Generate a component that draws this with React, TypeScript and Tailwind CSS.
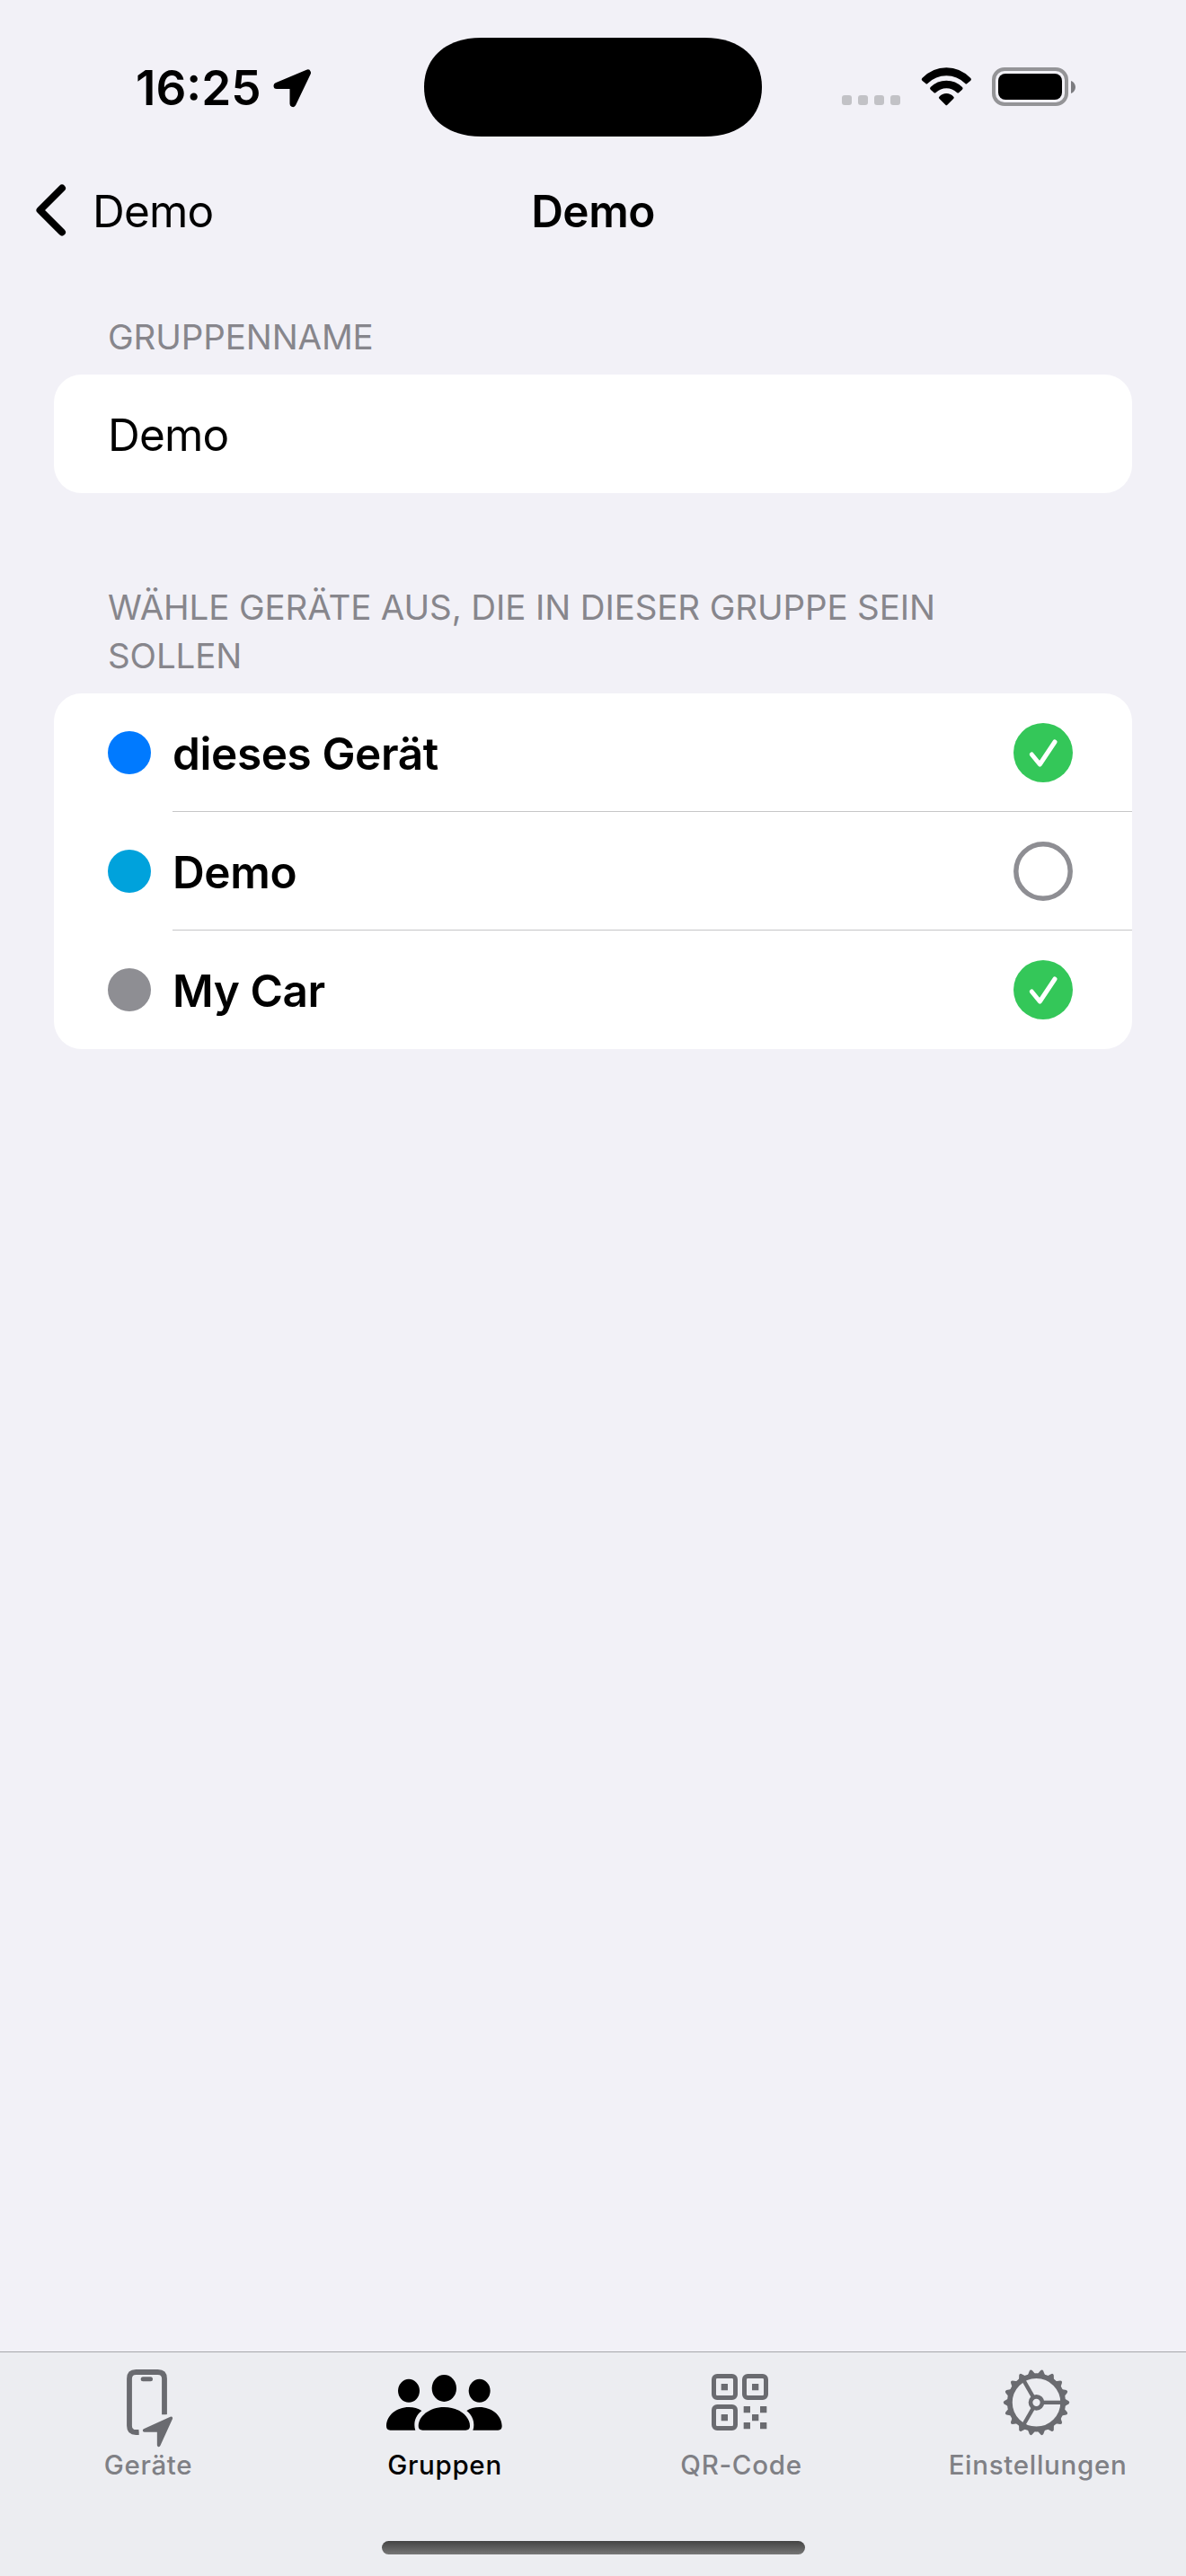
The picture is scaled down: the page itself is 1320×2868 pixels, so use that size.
import type { ReactNode } from "react";

type Device = { name: string; dot: string; selected: boolean };

const devices: Device[] = [
  { name: "dieses Gerät", dot: "bg-[#007aff]", selected: true },
  { name: "Demo", dot: "bg-[#00a2dc]", selected: false },
  { name: "My Car", dot: "bg-[#8e8e93]", selected: true },
];

function StatusBar() {
  return (
    <div className="flex h-[168px] justify-between">
      <div className="flex w-[472px] pl-[151px]">
        <span className="mt-[62px] h-[72px] w-[153px] whitespace-nowrap text-[53px] leading-[72px] font-semibold">
          16:25
        </span>
        <svg className="mt-[77px] h-[43px] w-[43px]" viewBox="0 0 43 43">
          <path d="M4 18.5 38.5 4 22 38.5V18.5Z" fill="#000" stroke="#000" strokeWidth="7" strokeLinejoin="round" />
        </svg>
      </div>
      <svg className="mt-[42px] h-[110px] w-[376px]" viewBox="0 0 376 110">
        <path d="M64 0H312C353 0 376 23 376 55S353 110 312 110H64C23 110 0 87 0 55S23 0 64 0Z" fill="#000" />
      </svg>
      <div className="flex w-[472px] pt-[75px] pl-[89px]">
        <div className="mt-[31px] flex h-[11px] gap-[7px]">
          {[0, 1, 2, 3].map((i) => (
            <span key={i} className="size-[11px] rounded-[3px] bg-[#c2c2c6]" />
          ))}
        </div>
        <svg className="ml-[22px] h-[43px] w-[59px]" viewBox="0 0 177 129">
          <path d="M7 36Q3 40 7 44L19 54Q22 57 25 54Q52 28 88 28T151 54Q154 57 157 54L169 44Q173 40 169 36Q134 1 88 1T7 36Z" />
          <path d="M35 66Q31 70 35 74L46 84Q49 87 53 84Q68 70 88 70T123 84Q127 87 130 84L141 74Q145 70 141 66Q119 44 88 44T35 66Z" />
          <path d="M64 98Q61 101 64 104L85 125Q88 128 91 125L112 104Q115 101 112 98Q102 87 88 87T64 98Z" />
        </svg>
        <div className="ml-[21px] h-[43px] w-[85px] rounded-[14px] border-4 border-[#949497] p-[3px]">
          <div className="h-[29px] w-[71px] rounded-[8px] bg-black" />
        </div>
        <svg className="mt-[15px] ml-[3px] h-[14px] w-[5px]" viewBox="0 0 5 14">
          <path d="M0 0C3 1 5 4 5 7S3 13 0 14Z" fill="#7c7c80" />
        </svg>
      </div>
    </div>
  );
}

function NavBar() {
  return (
    <div className="grid h-[132px] grid-cols-3 items-center text-[49.5px] leading-[64px] tracking-[-0.8px]">
      <div className="flex items-center pl-[40px]">
        <svg className="h-[58px] w-[34px]" viewBox="0 0 34 58" fill="none" stroke="#000" strokeWidth="8" strokeLinecap="round" strokeLinejoin="round">
          <path d="M29 4.5 4.5 29 29 53.5" />
        </svg>
        <span className="ml-[29px] pt-[2px]">Demo</span>
      </div>
      <h1 className="pt-[2px] text-center font-semibold tracking-[-0.5px]">Demo</h1>
    </div>
  );
}

function SectionTitle({ children }: { children: ReactNode }) {
  return (
    <h2 className="mb-[15px] w-[1000px] pl-[60px] text-[38.5px] leading-[54px] tracking-[-0.12px] text-[#87868c]">
      {children}
    </h2>
  );
}

function Check({ on }: { on: boolean }) {
  return (
    <svg className="size-[66px]" viewBox="0 0 66 66" fill="none">
      {on ? (
        <>
          <circle cx="33" cy="33" r="33" fill="#34c759" />
          <path d="M20.3 35 29.3 46 46 21" stroke="#fff" strokeWidth="5" strokeLinecap="round" strokeLinejoin="round" />
        </>
      ) : (
        <circle cx="33" cy="33" r="30.2" stroke="#8e8e93" strokeWidth="5.5" />
      )}
    </svg>
  );
}

function DeviceRow({ device, last }: { device: Device; last: boolean }) {
  return (
    <div className="flex h-[132px] items-center pl-[60px]">
      <span className={`size-[48px] rounded-full ${device.dot}`} />
      <div
        className={`ml-[24px] flex h-[132px] flex-1 items-center justify-between border-b pr-[66px] ${
          last ? "border-transparent" : "border-[#c6c6c8]"
        }`}
      >
        <span className="pt-[2px] text-[49.5px] leading-[64px] font-semibold tracking-[-0.4px]">{device.name}</span>
        <Check on={device.selected} />
      </div>
    </div>
  );
}

function DevicesIcon() {
  return (
    <svg className="h-[90px] w-[136px]" viewBox="51 108 408 270" fill="none">
      <path
        d="M309 265V145Q309 123 287 123H214Q192 123 192 145V302Q192 324 214 324H224"
        stroke="#6a6b70"
        strokeWidth="17.5"
      />
      <rect x="230" y="139" width="40" height="15" rx="7.5" fill="#6a6b70" />
      <path d="M241 318 331 277 290 367V318Z" fill="#ecedf1" stroke="#ecedf1" strokeWidth="34" strokeLinejoin="round" />
      <path d="M242 318 331 277 290 367V318Z" fill="#6a6b70" stroke="#6a6b70" strokeWidth="11" strokeLinejoin="round" />
    </svg>
  );
}

function GroupsIcon() {
  return (
    <svg className="h-[90px] w-[136px]" viewBox="81 108 408 270">
      <ellipse cx="165" cy="185.500" rx="36" ry="39" />
      <ellipse cx="401" cy="185.500" rx="36" ry="39" />
      <ellipse cx="283" cy="177" rx="41" ry="45" />
      <path d="M211 317Q197 317 197 303C197 272 232 240 283 240S369 272 369 303Q369 317 355 317Z" />
      <path d="M103 317Q90 317 90 303C90 268 124 240 165 240C182 240 196 244 208 252C191 266 184 282 184 300Q184 310 187 317Z" />
      <path d="M463 317Q476 317 476 303C476 268 442 240 401 240C384 240 370 244 358 252C375 266 382 282 382 300Q382 310 379 317Z" />
    </svg>
  );
}

function QrIcon() {
  return (
    <svg className="h-[90px] w-[136px]" viewBox="81 108 408 270" fill="#6a6b70">
      <g fill="none" stroke="#6a6b70" strokeWidth="15">
        <rect x="193.500" y="136.500" width="72" height="72" rx="11" />
        <rect x="295.500" y="136.500" width="72" height="72" rx="11" />
        <rect x="193.500" y="238.500" width="72" height="72" rx="11" />
      </g>
      <rect x="218" y="162" width="22" height="22" rx="1" />
      <rect x="321" y="162" width="22" height="22" rx="1" />
      <rect x="218" y="264" width="22" height="22" rx="1" />
      <rect x="293" y="237" width="22" height="22" rx="1" />
      <rect x="348" y="237" width="22" height="22" rx="1" />
      <rect x="321" y="264" width="22" height="22" rx="1" />
      <rect x="293" y="291" width="22" height="22" rx="1" />
      <rect x="348" y="291" width="22" height="22" rx="1" />
    </svg>
  );
}

function SettingsIcon() {
  const teeth = Array.from({ length: 18 }, (_, i) => i * 20);
  return (
    <svg className="h-[90px] w-[136px]" viewBox="141 108 408 270" fill="none">
      <g transform="translate(340.5 224.5)">
        <circle r="89" stroke="#6a6b70" strokeWidth="17.500" />
        {teeth.map((a) => (
          <path
            key={a}
            d="M94 -13 108 -4.500Q113 0 108 4.500L94 13Z"
            fill="#6a6b70"
            transform={`rotate(${a})`}
          />
        ))}
        {[0, 120, 240].map((a) => (
          <path key={a} d="M20 0H88" stroke="#6a6b70" strokeWidth="13" transform={`rotate(${a})`} />
        ))}
        <circle r="19.500" stroke="#6a6b70" strokeWidth="14" />
      </g>
    </svg>
  );
}

function Tab({ label, icon, active = false }: { label: string; icon: ReactNode; active?: boolean }) {
  return (
    <div className="flex flex-col items-center pt-[17px]">
      {icon}
      <span
        className={`mt-px text-[29.5px] leading-[34px] font-medium tracking-[0.7px] ${
          active ? "text-black" : "text-[#7f8085]"
        }`}
      >
        {label}
      </span>
    </div>
  );
}

export default function App() {
  return (
    <div className="flex h-[2868px] w-[1320px] flex-col overflow-hidden bg-[#f2f1f7] font-['Inter',sans-serif] text-black">
      <StatusBar />
      <NavBar />
      <main className="flex flex-1 flex-col px-[60px] pt-[48px]">
        <SectionTitle>GRUPPENNAME</SectionTitle>
        <div className="flex h-[132px] items-center rounded-[31px] bg-white pt-[2px] pl-[60px] text-[49.5px] leading-[64px] tracking-[-0.8px]">
          Demo
        </div>
        <div className="mt-[100px]">
          <SectionTitle>
            WÄHLE GERÄTE AUS, DIE IN DIESER GRUPPE SEIN
            <br />
            SOLLEN
          </SectionTitle>
          <div className="overflow-hidden rounded-[31px] bg-white">
            {devices.map((device, i) => (
              <DeviceRow key={device.name} device={device} last={i === devices.length - 1} />
            ))}
          </div>
        </div>
      </main>
      <footer className="flex h-[250px] flex-col border-t border-[#a6a6ab] bg-[#ecedf1]">
        <div className="grid h-[210px] grid-cols-4">
          <Tab label="Geräte" icon={<DevicesIcon />} />
          <Tab label="Gruppen" icon={<GroupsIcon />} active />
          <Tab label="QR-Code" icon={<QrIcon />} />
          <Tab label="Einstellungen" icon={<SettingsIcon />} />
        </div>
        <div className="ml-[425px] h-[15px] w-[471px] rounded-full bg-linear-to-b from-[#444444] to-[#777777]" />
      </footer>
    </div>
  );
}
